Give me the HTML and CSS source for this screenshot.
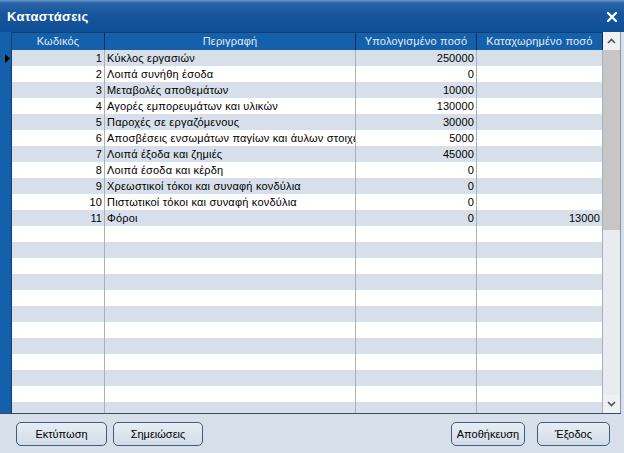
FILE: index.html
```html
<!DOCTYPE html>
<html lang="el">
<head>
<meta charset="utf-8">
<title>Καταστάσεις</title>
<link rel="stylesheet" href="styles.css">
</head>
<body>
<div class="window">
  <div class="titlebar">
    <span class="title">Καταστάσεις</span>
    <svg class="close" width="10" height="10" viewBox="0 0 10 10"><path d="M1 1 L9 9 M9 1 L1 9" stroke="#fff" stroke-width="2.2" stroke-linecap="square"/></svg>
  </div>
  <div class="gridframe">
    <div class="indicator">
      <div class="ind-head"></div>
      <div class="ind-row"><svg width="5" height="9" viewBox="0 0 5 9"><path d="M0 0 L5 4.5 L0 9 Z" fill="#000"/></svg></div>
    </div>
    <div class="table">
      <div class="thead">
        <div class="th">Κωδικός</div>
        <div class="th">Περιγραφή</div>
        <div class="th">Υπολογισμένο ποσό</div>
        <div class="th">Καταχωρημένο ποσό</div>
      </div>
      <div class="tbody">
        <div class="tr"><div class="td num">1</div><div class="td">Κύκλος εργασιών</div><div class="td num">250000</div><div class="td num"></div></div>
        <div class="tr"><div class="td num">2</div><div class="td">Λοιπά συνήθη έσοδα</div><div class="td num">0</div><div class="td num"></div></div>
        <div class="tr"><div class="td num">3</div><div class="td">Μεταβολές αποθεμάτων</div><div class="td num">10000</div><div class="td num"></div></div>
        <div class="tr"><div class="td num">4</div><div class="td">Αγορές εμπορευμάτων και υλικών</div><div class="td num">130000</div><div class="td num"></div></div>
        <div class="tr"><div class="td num">5</div><div class="td">Παροχές σε εργαζόμενους</div><div class="td num">30000</div><div class="td num"></div></div>
        <div class="tr"><div class="td num">6</div><div class="td">Αποσβέσεις ενσωμάτων παγίων και άυλων στοιχείων</div><div class="td num">5000</div><div class="td num"></div></div>
        <div class="tr"><div class="td num">7</div><div class="td">Λοιπά έξοδα και ζημιές</div><div class="td num">45000</div><div class="td num"></div></div>
        <div class="tr"><div class="td num">8</div><div class="td">Λοιπά έσοδα και κέρδη</div><div class="td num">0</div><div class="td num"></div></div>
        <div class="tr"><div class="td num">9</div><div class="td">Χρεωστικοί τόκοι και συναφή κονδύλια</div><div class="td num">0</div><div class="td num"></div></div>
        <div class="tr"><div class="td num">10</div><div class="td">Πιστωτικοί τόκοι και συναφή κονδύλια</div><div class="td num">0</div><div class="td num"></div></div>
        <div class="tr"><div class="td num">11</div><div class="td">Φόροι</div><div class="td num">0</div><div class="td num">13000</div></div>
        <div class="tr"><div class="td"></div><div class="td"></div><div class="td"></div><div class="td"></div></div>
        <div class="tr"><div class="td"></div><div class="td"></div><div class="td"></div><div class="td"></div></div>
        <div class="tr"><div class="td"></div><div class="td"></div><div class="td"></div><div class="td"></div></div>
        <div class="tr"><div class="td"></div><div class="td"></div><div class="td"></div><div class="td"></div></div>
        <div class="tr"><div class="td"></div><div class="td"></div><div class="td"></div><div class="td"></div></div>
        <div class="tr"><div class="td"></div><div class="td"></div><div class="td"></div><div class="td"></div></div>
        <div class="tr"><div class="td"></div><div class="td"></div><div class="td"></div><div class="td"></div></div>
        <div class="tr"><div class="td"></div><div class="td"></div><div class="td"></div><div class="td"></div></div>
        <div class="tr"><div class="td"></div><div class="td"></div><div class="td"></div><div class="td"></div></div>
        <div class="tr"><div class="td"></div><div class="td"></div><div class="td"></div><div class="td"></div></div>
        <div class="tr"><div class="td"></div><div class="td"></div><div class="td"></div><div class="td"></div></div>
        <div class="tr"><div class="td"></div><div class="td"></div><div class="td"></div><div class="td"></div></div>
      </div>
    </div>
    <div class="scrollbar">
      <div class="sb-btn"><svg width="9" height="6" viewBox="0 0 9 6"><path d="M1 5 L4.5 1.5 L8 5" fill="none" stroke="#4a5560" stroke-width="1.6"/></svg></div>
      <div class="sb-track"><div class="sb-thumb"></div></div>
      <div class="sb-btn"><svg width="9" height="6" viewBox="0 0 9 6"><path d="M1 1 L4.5 4.5 L8 1" fill="none" stroke="#4a5560" stroke-width="1.6"/></svg></div>
    </div>
  </div>
  <div class="buttons">
    <div class="btn-group">
      <button class="btn w91">Εκτύπωση</button>
      <button class="btn w90">Σημειώσεις</button>
    </div>
    <div class="btn-group right">
      <button class="btn w74">Αποθήκευση</button>
      <button class="btn w73">Έξοδος</button>
    </div>
  </div>
</div>
</body>
</html>
```

FILE: styles.css
```css
* { box-sizing: border-box; }
html, body { margin: 0; padding: 0; }
body {
  width: 624px;
  height: 453px;
  overflow: hidden;
  font-family: "Liberation Sans", Arial, sans-serif;
  font-size: 11px;
  color: #000;
  background: #d7e0ea;
}
.window {
  width: 624px;
  height: 453px;
  display: flex;
  flex-direction: column;
  background: #d7e0ea;
}
.titlebar {
  height: 32px;
  flex: none;
  display: flex;
  align-items: center;
  justify-content: space-between;
  padding: 1px 7px 0 7px;
  background: linear-gradient(#6a98cc 0, #2a64a8 3px, #17559c 14px, #0f4f96 32px);
}
.title {
  color: #fff;
  font-weight: bold;
  font-size: 13px;
  letter-spacing: 0.3px;
}
.close { display: block; }
.gridframe {
  height: 382px;
  flex: none;
  display: flex;
  border-bottom: 1px solid #3a4a60;
  margin-right: 3px;
}
.indicator {
  width: 12px;
  flex: none;
  background: #1460aa;
  border-right: 1px solid #0c3e78;
}
.ind-head { height: 18px; }
.ind-row {
  height: 16px;
  display: flex;
  align-items: center;
  padding-left: 5px;
}
.ind-row svg { display: block; }
.table {
  width: 591px;
  flex: none;
  display: flex;
  flex-direction: column;
  overflow: hidden;
}
.thead {
  height: 18px;
  flex: none;
  display: grid;
  grid-template-columns: 93px 251px 121px 126px;
  background: #1460aa;
  border-top: 1px solid #0c3e78;
}
.th {
  color: #e4ecf6;
  text-align: center;
  line-height: 16px;
  border-right: 1px solid #0a2c58;
  white-space: nowrap;
  overflow: hidden;
  letter-spacing: 0.2px;
}
.tbody {
  flex: 1;
  overflow: hidden;
  background: #fff;
}
.tr {
  height: 16px;
  display: grid;
  grid-template-columns: 93px 251px 121px 126px;
}
.tr:nth-child(odd) { background: #d7e0ea; }
.td {
  line-height: 17px;
  padding: 0 2px;
  white-space: nowrap;
  overflow: hidden;
  border-right: 1px solid #a8b0ba;
  letter-spacing: 0.2px;
}
.td.num { text-align: right; padding-right: 2px; letter-spacing: 0.1px; }
.scrollbar {
  width: 18px;
  flex: none;
  display: flex;
  flex-direction: column;
  background: #eceff3;
  border-right: 1px solid #8c949c;
}
.sb-btn {
  height: 18px;
  flex: none;
  display: flex;
  align-items: center;
  justify-content: center;
  background: #eef1f4;
}
.sb-btn svg { display: block; }
.sb-track {
  flex: 1;
  background: #e8ebef;
}
.sb-thumb {
  height: 180px;
  background: #c6c6c6;
}
.buttons {
  flex: 1;
  display: flex;
  justify-content: space-between;
  padding: 8px 14px 0 16px;
}
.btn-group { display: flex; gap: 6px; height: 24px; }
.btn-group.right { gap: 12px; }
.btn {
  height: 24px;
  border: 1px solid #405c7a;
  border-radius: 5px;
  background: linear-gradient(#e6edf4, #d2dce8);
  font-family: "Liberation Sans", Arial, sans-serif;
  font-size: 11px;
  color: #000;
  padding: 0;
}
.w91 { width: 91px; }
.w90 { width: 90px; }
.w74 { width: 74px; }
.w73 { width: 73px; }
```
